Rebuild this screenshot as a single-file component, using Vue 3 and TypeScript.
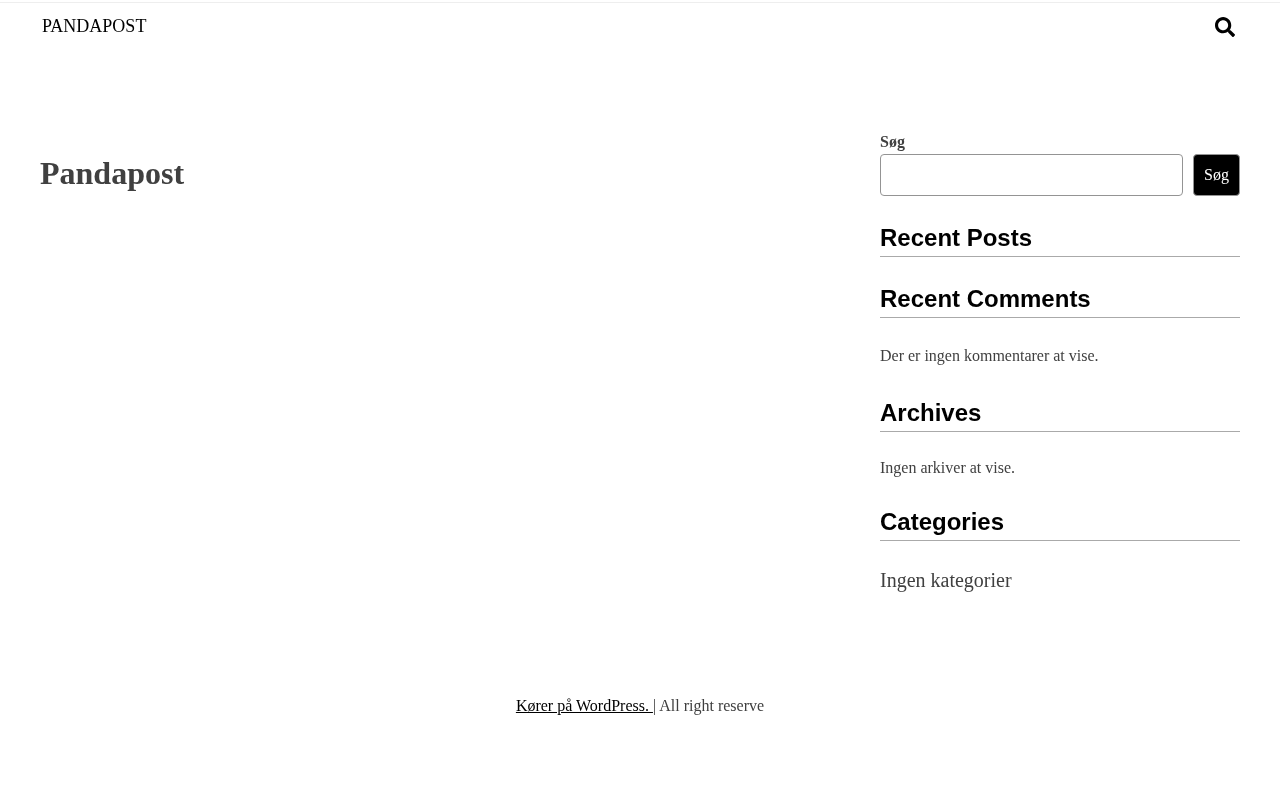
<script setup lang="ts">
const widgets = [
  { title: 'Recent Posts', text: '', cls: 'posts' },
  { title: 'Recent Comments', text: 'Der er ingen kommentarer at vise.', cls: 'comments' },
  { title: 'Archives', text: 'Ingen arkiver at vise.', cls: 'archives' },
  { title: 'Categories', text: 'Ingen kategorier', cls: 'categories' },
]
</script>

<template>
  <div class="page">
    <header class="site-header">
      <a class="brand" href="#">PANDAPOST</a>
      <button class="search-toggle" aria-label="Søg">
        <svg width="20" height="20" viewBox="0 0 512 512">
          <path fill="#000" d="M505 442.7 405.3 343c-4.500-4.500-10.600-7-17-7H372c27.600-35.300 44-79.700 44-128C416 93.100 322.900 0 208 0S0 93.100 0 208s93.100 208 208 208c48.300 0 92.700-16.400 128-44v16.300c0 6.400 2.500 12.500 7 17l99.700 99.700c9.400 9.400 24.600 9.400 33.900 0l28.300-28.300c9.400-9.400 9.400-24.600.1-34zM208 336c-70.700 0-128-57.200-128-128 0-70.700 57.200-128 128-128 70.700 0 128 57.200 128 128 0 70.700-57.200 128-128 128z" />
        </svg>
      </button>
    </header>

    <main class="content">
      <section class="primary">
        <h1 class="page-title">Pandapost</h1>
      </section>

      <aside class="sidebar">
        <form class="search" @submit.prevent>
          <label class="search-label" for="s">Søg</label>
          <div class="search-row">
            <input id="s" class="search-input" type="text" />
            <button class="search-button" type="submit">Søg</button>
          </div>
        </form>

        <div v-for="w in widgets" :key="w.title" class="widget" :class="w.cls">
          <h2 class="widget-title">{{ w.title }}</h2>
          <p v-if="w.text" class="widget-text">{{ w.text }}</p>
        </div>
      </aside>
    </main>

    <footer class="site-footer">
      <a href="#">Kører på WordPress. </a><span>| All right reserve</span>
    </footer>
  </div>
</template>

<style>
html,
body {
  margin: 0;
  background: #fff;
}
</style>

<style scoped>
.page {
  min-height: 800px;
  padding-top: 2px;
  font-family: "Liberation Serif", "Times New Roman", serif;
  color: #404040;
  font-size: 16px;
  box-sizing: border-box;
  will-change: transform;
}

.site-header {
  display: flex;
  justify-content: space-between;
  align-items: flex-start;
  padding: 13px 45px 0 42px;
  height: 63px;
  border-top: 1px solid #eee;
}

.brand {
  color: #000;
  font-size: 18px;
  line-height: 20px;
  text-decoration: none;
}

.search-toggle {
  display: flex;
  padding: 0;
  margin-top: 1px;
  border: 0;
  background: none;
}

.content {
  display: flex;
  justify-content: space-between;
  padding: 51px 40px 0;
}

.page-title {
  margin: 21px 0 0;
  font-size: 32px;
  line-height: 44px;
  font-weight: 700;
}

.sidebar {
  width: 360px;
}

.search-label {
  display: block;
  font-weight: 700;
  line-height: 24px;
}

.search-row {
  display: flex;
  gap: 10px;
}

.search-input {
  flex: 1;
  height: 42px;
  box-sizing: border-box;
  border: 1px solid #949494;
  border-radius: 4px;
  background: #fff;
  min-width: 0;
}

.search-button {
  width: 47px;
  height: 42px;
  padding: 0;
  box-sizing: border-box;
  border: 1px solid #949494;
  border-radius: 4px;
  background: #000;
  color: #fff;
  font-family: inherit;
  font-size: 16px;
}

.widget-title {
  margin: 0;
  padding-bottom: 2px;
  border-bottom: 1px solid #aaa;
  color: #000;
  font-family: "Liberation Sans", Arial, sans-serif;
  font-size: 24px;
  line-height: 32px;
  font-weight: 700;
}

.widget.posts {
  margin-top: 26px;
}

.widget.comments {
  margin-top: 26px;
}

.widget-text {
  margin: 26px 0 0;
  line-height: 24px;
}

.widget.archives {
  margin-top: 29px;
}

.widget.archives .widget-text {
  margin-top: 24px;
}

.widget.categories {
  margin-top: 26px;
}

.widget.categories .widget-text {
  margin-top: 23px;
  font-size: 20px;
  line-height: 32px;
}

.site-footer {
  margin-top: 98px;
  text-align: center;
  line-height: 24px;
  white-space: pre;
}

.site-footer a {
  color: #000;
}
</style>
